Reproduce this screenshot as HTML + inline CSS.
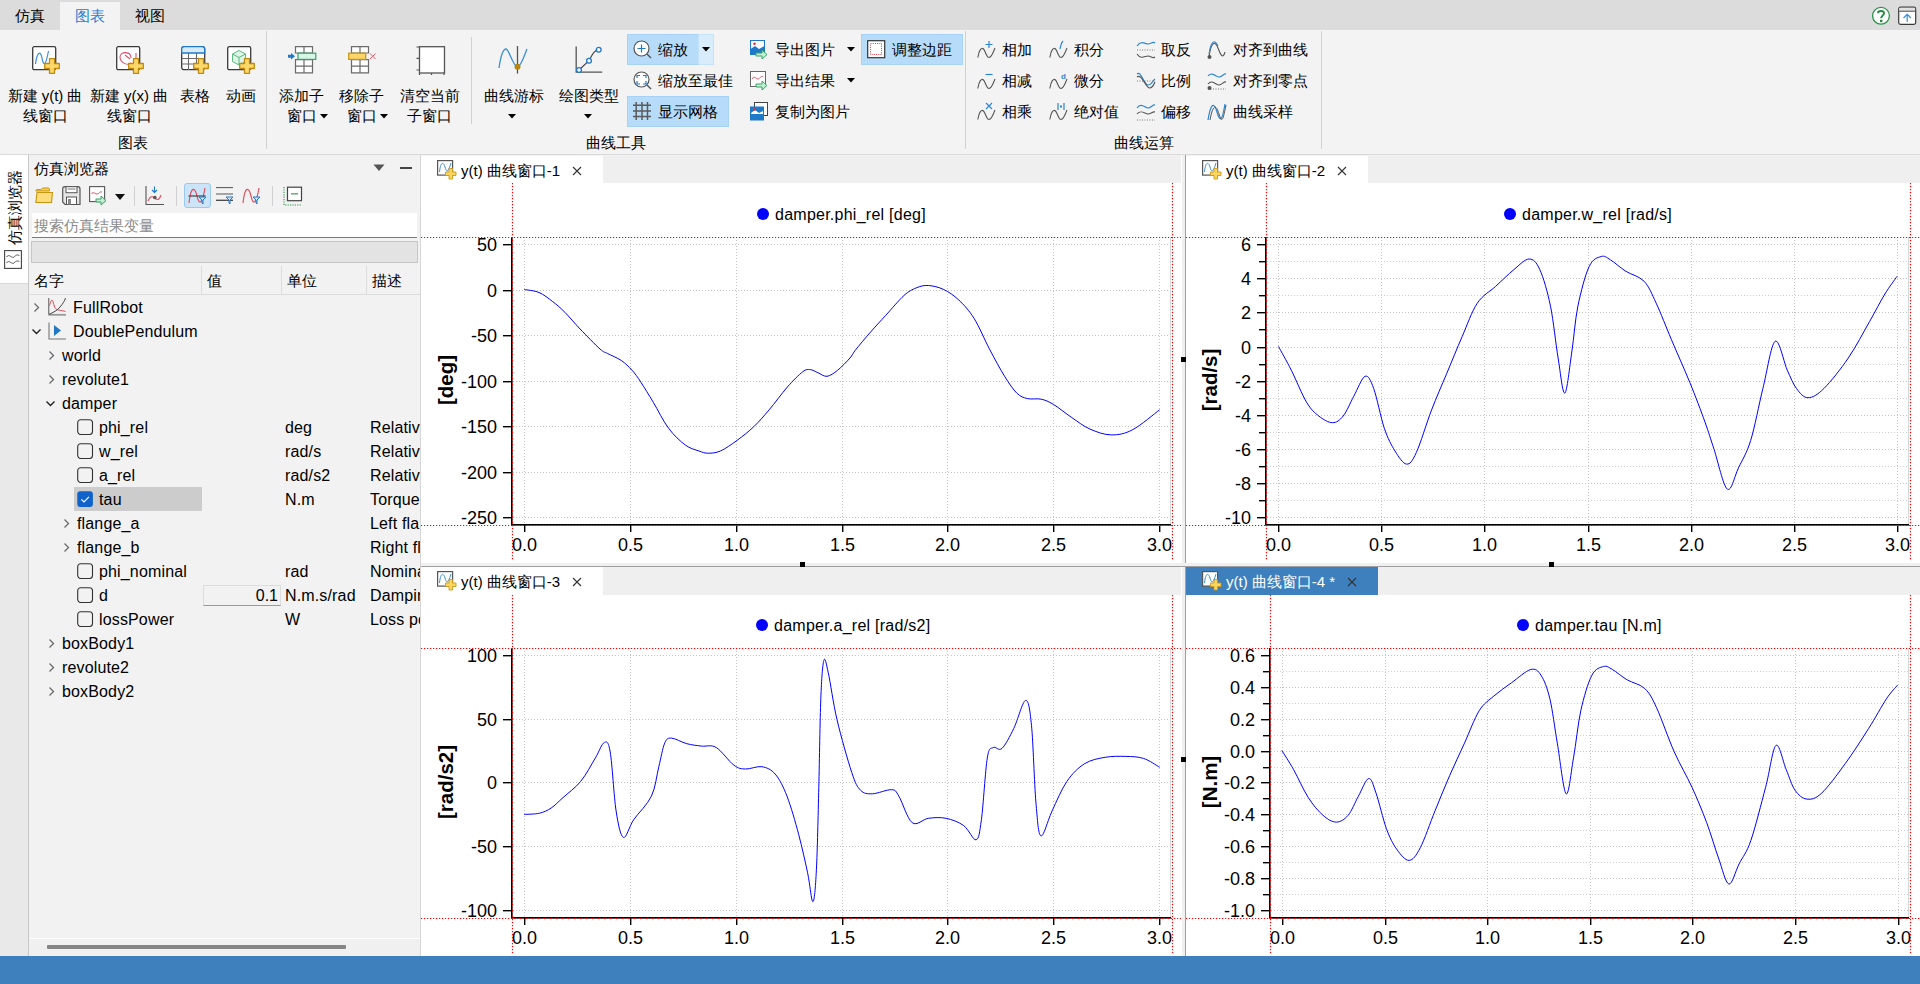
<!DOCTYPE html>
<html><head><meta charset="utf-8"><style>
*{margin:0;padding:0;box-sizing:border-box}
html,body{width:1920px;height:984px;overflow:hidden;background:#f3f3f3;font-family:"Liberation Sans",sans-serif;color:#000}
.a{position:absolute;white-space:nowrap}
svg text{font-family:"Liberation Sans",sans-serif}
.tk{font-size:18px;fill:#000}
.lg{font-size:16px;fill:#000;letter-spacing:0.25px}
.yl{font-size:20.5px;font-weight:bold;fill:#000}
.ct{position:absolute;height:28px;font-size:15px;line-height:28px;white-space:nowrap}
</style></head><body>
<div class="a" style="left:0;top:0;width:1920px;height:30px;background:#dcdcdc"></div>
<div class="a" style="left:60px;top:2px;width:60px;height:28px;background:#f3f3f3"></div>
<div class="a" style="left:15px;top:6px;font-size:15px;line-height:20px;color:#000;">仿真</div>
<div class="a" style="left:75px;top:6px;font-size:15px;line-height:20px;color:#2b7bd0;">图表</div>
<div class="a" style="left:135px;top:6px;font-size:15px;line-height:20px;color:#000;">视图</div>
<svg class="a" style="left:1872px;top:6px" width="19" height="20" viewBox="0 0 19 20"><circle cx="9" cy="9.8" r="8.4" fill="#fff" stroke="#2a9448" stroke-width="1.3"/><path d="M6 7.2 C6 4.3 12 4.3 12 7.2 C12 9.3 9.2 9.5 9.2 12.3" fill="none" stroke="#258a42" stroke-width="1.9"/><rect x="8" y="13.8" width="2.4" height="2.4" fill="#258a42"/></svg>
<svg class="a" style="left:1898px;top:6px" width="19" height="20" viewBox="0 0 19 20"><rect x="0.7" y="1.2" width="17" height="17.2" rx="1.8" fill="#fff" stroke="#3a3a3a" stroke-width="1.2"/><rect x="1.3" y="1.8" width="15.8" height="3" fill="#e2e2e2"/><path d="M0.7 5.2h17" stroke="#555" stroke-width="1.1"/><path d="M9.2 16V8.3 M5.5 12l3.7-3.7 3.7 3.7" fill="none" stroke="#3a8edb" stroke-width="1.2"/></svg>
<div class="a" style="left:0;top:154px;width:1920px;height:1px;background:#dadada"></div>
<div class="a" style="left:266px;top:31px;width:1px;height:118px;background:#d0d0d0"></div>
<div class="a" style="left:471px;top:37px;width:1px;height:87px;background:#d0d0d0"></div>
<div class="a" style="left:965px;top:31px;width:1px;height:118px;background:#d0d0d0"></div>
<div class="a" style="left:1321px;top:31px;width:1px;height:118px;background:#d0d0d0"></div>
<svg class="a" style="left:32px;top:46px" width="28" height="28" viewBox="0 0 28 28"><rect x="0.7" y="0.7" width="23" height="23" rx="1.5" fill="#fff" stroke="#3a3a3a" stroke-width="1.3"/><path d="M3.5 18 C5 6 8.5 4 10 12 S13.5 21 16.5 5" fill="none" stroke="#3a8edb" stroke-width="1.2"/><path d="M17.5 12.7h5v4.8h4.8v5h-4.8v4.8h-5v-4.8h-4.8v-5h4.8z" fill="#fcd86a" stroke="#c08a10" stroke-width="1.3" stroke-linejoin="round"/></svg>
<svg class="a" style="left:116px;top:46px" width="28" height="28" viewBox="0 0 28 28"><rect x="0.7" y="0.7" width="23" height="23" rx="1.5" fill="#fff" stroke="#3a3a3a" stroke-width="1.3"/><path d="M15 12 C15 5 4 5 4 11 C4 17 12 20 15 17" fill="none" stroke="#e0506a" stroke-width="1.1"/><path d="M9 9l5 4" stroke="#e0506a" stroke-width="1.1"/><path d="M20 7v9" stroke="#e0506a" stroke-width="1.1"/><path d="M17.5 12.7h5v4.8h4.8v5h-4.8v4.8h-5v-4.8h-4.8v-5h4.8z" fill="#fcd86a" stroke="#c08a10" stroke-width="1.3" stroke-linejoin="round"/></svg>
<svg class="a" style="left:181px;top:46px" width="28" height="28" viewBox="0 0 28 28"><rect x="0.7" y="0.7" width="23" height="23" rx="2.5" fill="#fff" stroke="#3a3a3a" stroke-width="1.3"/><path d="M0.7 7 V3.2 Q0.7 0.7 3.2 0.7 H21.2 Q23.7 0.7 23.7 3.2 V7z" fill="#d8ebfb" stroke="#1f78c8" stroke-width="1.3"/><path d="M7.5 7v17M15.5 7v17M1 12.5h23M1 18h23" stroke="#6a6a6a" stroke-width="1.1"/><path d="M17.5 12.7h5v4.8h4.8v5h-4.8v4.8h-5v-4.8h-4.8v-5h4.8z" fill="#fcd86a" stroke="#c08a10" stroke-width="1.3" stroke-linejoin="round"/></svg>
<svg class="a" style="left:227px;top:46px" width="28" height="28" viewBox="0 0 28 28"><rect x="0.7" y="0.7" width="23" height="23" rx="1.5" fill="#fff" stroke="#3a3a3a" stroke-width="1.3"/><path d="M12 4.5 L18.5 8 V15.5 L12 19 L5.5 15.5 V8z" fill="#dff5e8" stroke="#5bb981" stroke-width="1"/><path d="M5.5 8 L12 11.5 L18.5 8 M12 11.5 V19" fill="none" stroke="#5bb981" stroke-width="1"/><path d="M17.5 12.7h5v4.8h4.8v5h-4.8v4.8h-5v-4.8h-4.8v-5h4.8z" fill="#fcd86a" stroke="#c08a10" stroke-width="1.3" stroke-linejoin="round"/></svg>
<svg class="a" style="left:288px;top:46px" width="30" height="28" viewBox="0 0 30 28"><path d="M7.5 0.7h17v6.3h-17z M7.5 13.6h17v13.3h-17z" fill="#fff" stroke="#6a6a6a" stroke-width="1.2"/><path d="M16 0.7v6.3 M16 13.6v13.3 M7.5 20.2h17" stroke="#6a6a6a" stroke-width="1.2"/><rect x="10" y="7.2" width="17.8" height="6.2" fill="#d6f7e6" stroke="#3aa06a" stroke-width="1.2"/><path d="M0 8.8h3V7l4 3.3L3 13.6v-1.8H0z" fill="#1f78c8"/></svg>
<svg class="a" style="left:348px;top:46px" width="30" height="28" viewBox="0 0 30 28"><path d="M3.5 0.7h17v6.3h-17z M3.5 13.6h17v13.3h-17z" fill="#fff" stroke="#6a6a6a" stroke-width="1.2"/><path d="M12 0.7v6.3 M12 13.6v13.3 M3.5 20.2h17" stroke="#6a6a6a" stroke-width="1.2"/><rect x="0.7" y="7.2" width="17" height="6.2" fill="#fcd56a" stroke="#c8940e" stroke-width="1.2"/><path d="M22 7.5l5.5 5.5 M27.5 7.5l-5.5 5.5" stroke="#e05a6a" stroke-width="1"/></svg>
<svg class="a" style="left:414px;top:46px" width="32" height="30" viewBox="0 0 32 30"><rect x="5.5" y="0.7" width="25" height="26.3" fill="#fff" stroke="#555" stroke-width="1.3"/><path d="M2.5 1h3 M2.5 12.4h3 M2.5 24h3 M5.5 27v2 M17.5 27v2 M30 27v2" stroke="#555" stroke-width="1.2"/></svg>
<svg class="a" style="left:496px;top:44px" width="34" height="32" viewBox="0 0 34 32"><path d="M3 24 C5 10 7.5 5 10 5 C13 5 17 22.8 21.5 22.8 C25 22.8 28 12 31 5" fill="none" stroke="#3a8edb" stroke-width="1.3"/><path d="M21.5 2v27.6" stroke="#555" stroke-width="1.3"/><circle cx="21.5" cy="22.8" r="3" fill="#b8860b"/></svg>
<svg class="a" style="left:574px;top:45px" width="32" height="30" viewBox="0 0 32 30"><path d="M2.2 1.5v25.7h26" fill="none" stroke="#555" stroke-width="1.3"/><path d="M5 25 L15 15.7 C18 10 20 5 24.7 4.7" fill="none" stroke="#444" stroke-width="1.1"/><circle cx="5" cy="25" r="2.4" fill="#fff" stroke="#1f78c8" stroke-width="1.3"/><circle cx="15" cy="15.7" r="2.4" fill="#fff" stroke="#1f78c8" stroke-width="1.3"/><circle cx="24.7" cy="4.7" r="2.4" fill="#fff" stroke="#1f78c8" stroke-width="1.3"/></svg>
<div class="a" style="left:-15.0px;top:85.5px;width:120px;text-align:center;font-size:15px;line-height:20px;color:#000">新建 y(t) 曲</div>
<div class="a" style="left:-15.0px;top:105.5px;width:120px;text-align:center;font-size:15px;line-height:20px;color:#000">线窗口</div>
<div class="a" style="left:69.0px;top:85.5px;width:120px;text-align:center;font-size:15px;line-height:20px;color:#000">新建 y(x) 曲</div>
<div class="a" style="left:69.0px;top:105.5px;width:120px;text-align:center;font-size:15px;line-height:20px;color:#000">线窗口</div>
<div class="a" style="left:135.0px;top:85.5px;width:120px;text-align:center;font-size:15px;line-height:20px;color:#000">表格</div>
<div class="a" style="left:181.0px;top:85.5px;width:120px;text-align:center;font-size:15px;line-height:20px;color:#000">动画</div>
<div class="a" style="left:73.0px;top:132.5px;width:120px;text-align:center;font-size:15px;line-height:20px;color:#000">图表</div>
<div class="a" style="left:241.5px;top:85.5px;width:120px;text-align:center;font-size:15px;line-height:20px;color:#000">添加子</div>
<div class="a" style="left:287px;top:105.5px;font-size:15px;line-height:20px;color:#000;">窗口</div>
<svg class="a" style="left:320px;top:114px" width="8" height="5" viewBox="0 0 8 5"><path d="M0 0h8L4 4.5z" fill="#000"/></svg>
<div class="a" style="left:301.5px;top:85.5px;width:120px;text-align:center;font-size:15px;line-height:20px;color:#000">移除子</div>
<div class="a" style="left:347px;top:105.5px;font-size:15px;line-height:20px;color:#000;">窗口</div>
<svg class="a" style="left:380px;top:114px" width="8" height="5" viewBox="0 0 8 5"><path d="M0 0h8L4 4.5z" fill="#000"/></svg>
<div class="a" style="left:370.0px;top:85.5px;width:120px;text-align:center;font-size:15px;line-height:20px;color:#000">清空当前</div>
<div class="a" style="left:369.0px;top:105.5px;width:120px;text-align:center;font-size:15px;line-height:20px;color:#000">子窗口</div>
<div class="a" style="left:453.5px;top:85.5px;width:120px;text-align:center;font-size:15px;line-height:20px;color:#000">曲线游标</div>
<svg class="a" style="left:508px;top:114px" width="8" height="5" viewBox="0 0 8 5"><path d="M0 0h8L4 4.5z" fill="#000"/></svg>
<div class="a" style="left:529.0px;top:85.5px;width:120px;text-align:center;font-size:15px;line-height:20px;color:#000">绘图类型</div>
<svg class="a" style="left:584px;top:114px" width="8" height="5" viewBox="0 0 8 5"><path d="M0 0h8L4 4.5z" fill="#000"/></svg>
<div class="a" style="left:627px;top:34px;width:72px;height:31px;background:#b7dcfa;border:1px solid #a6d2f7"></div>
<div class="a" style="left:698px;top:34px;width:16px;height:31px;background:#d9ecfc;border:1px solid #c4e2fa"></div>
<svg class="a" style="left:702px;top:47px" width="8" height="5" viewBox="0 0 8 5"><path d="M0 0h8L4 4.5z" fill="#000"/></svg>
<div class="a" style="left:627px;top:96px;width:102px;height:31px;background:#b7dcfa;border:1px solid #a6d2f7"></div>
<div class="a" style="left:861px;top:34px;width:102px;height:31px;background:#b7dcfa;border:1px solid #a6d2f7"></div>
<svg class="a" style="left:632px;top:39px" width="20" height="20" viewBox="0 0 20 20"><circle cx="9.5" cy="9.5" r="7.5" fill="#fff" stroke="#555" stroke-width="1.2"/><path d="M15 15l4 4" stroke="#555" stroke-width="1.4"/><path d="M5.5 9.5h8 M9.5 5.5v8" stroke="#1f78c8" stroke-width="1.2"/></svg>
<div class="a" style="left:658px;top:40px;font-size:15px;line-height:20px;color:#000;">缩放</div>
<svg class="a" style="left:632px;top:70px" width="20" height="20" viewBox="0 0 20 20"><circle cx="9.5" cy="9.5" r="7.5" fill="#fff" stroke="#555" stroke-width="1.2"/><path d="M15 15l4 4" stroke="#555" stroke-width="1.4"/><path d="M5 8V5.5h3 M11 5.5h3V8 M14 11v3h-3 M8 14H5v-3" fill="none" stroke="#1f78c8" stroke-width="1.2"/></svg>
<div class="a" style="left:658px;top:71px;font-size:15px;line-height:20px;color:#000;">缩放至最佳</div>
<svg class="a" style="left:633px;top:102px" width="19" height="19" viewBox="0 0 19 19"><path d="M0 3.3h18 M0 9h18 M0 14.6h18 M3.2 0v18 M9 0v18 M14.5 0v18" stroke="#5a5a5a" stroke-width="1.5"/></svg>
<div class="a" style="left:658px;top:102px;font-size:15px;line-height:20px;color:#000;">显示网格</div>
<svg class="a" style="left:750px;top:40px" width="20" height="20" viewBox="0 0 20 20"><rect x="0.5" y="0.5" width="14" height="14" fill="#fff" stroke="#1f78c8" stroke-width="1"/><path d="M0.5 14.5V9 L5 6 L9 9 L14.5 6v8.5z" fill="#1f78c8"/><circle cx="4.5" cy="3.8" r="1.3" fill="#e03040"/><path d="M6 13h6v-3l5 4.5-5 4.5v-3H6z" fill="#bff0cf" stroke="#3aa06a" stroke-width="1"/></svg>
<div class="a" style="left:775px;top:40px;font-size:15px;line-height:20px;color:#000;">导出图片</div>
<svg class="a" style="left:847px;top:47px" width="8" height="5" viewBox="0 0 8 5"><path d="M0 0h8L4 4.5z" fill="#000"/></svg>
<svg class="a" style="left:750px;top:71px" width="20" height="20" viewBox="0 0 20 20"><rect x="0.5" y="0.5" width="15" height="15" fill="#fff" stroke="#666" stroke-width="1"/><path d="M2 8 C4 4 6 8 8 8 S11 4 13 6" fill="none" stroke="#e05060" stroke-width="1"/><path d="M6 13h6v-3l5 4.5-5 4.5v-3H6z" fill="#bff0cf" stroke="#3aa06a" stroke-width="1"/></svg>
<div class="a" style="left:775px;top:71px;font-size:15px;line-height:20px;color:#000;">导出结果</div>
<svg class="a" style="left:847px;top:78px" width="8" height="5" viewBox="0 0 8 5"><path d="M0 0h8L4 4.5z" fill="#000"/></svg>
<svg class="a" style="left:750px;top:102px" width="20" height="20" viewBox="0 0 20 20"><rect x="4.5" y="0.5" width="13" height="13" fill="#fff" stroke="#444" stroke-width="1"/><rect x="0" y="4.5" width="14" height="14" fill="#1f78c8"/><path d="M1 11 L5 8 L9 11 L13 9v3H1z" fill="#fff"/><circle cx="4.5" cy="7.5" r="1.3" fill="#e03040"/></svg>
<div class="a" style="left:775px;top:102px;font-size:15px;line-height:20px;color:#000;">复制为图片</div>
<svg class="a" style="left:867px;top:40px" width="19" height="19" viewBox="0 0 19 19"><rect x="0.7" y="0.7" width="17" height="17" fill="#fff" stroke="#333" stroke-width="1.2"/><rect x="3.5" y="3.5" width="11" height="11" fill="none" stroke="#e0303a" stroke-width="1" stroke-dasharray="1 1.2"/></svg>
<div class="a" style="left:892px;top:40px;font-size:15px;line-height:20px;color:#000;">调整边距</div>
<div class="a" style="left:556.0px;top:132.5px;width:120px;text-align:center;font-size:15px;line-height:20px;color:#000">曲线工具</div>
<svg class="a" style="left:977px;top:40px" width="20" height="20" viewBox="0 0 20 20"><path d="M0.8 17.5 C2 10 4.5 7 6.5 9 S9.5 17.5 12 17.5 S16.5 12 18 8" fill="none" stroke="#555" stroke-width="1.1"/><path d="M12 1v7 M8.5 4.5h7" stroke="#2a85d5" stroke-width="1.2"/></svg>
<div class="a" style="left:1002px;top:40px;font-size:15px;line-height:20px;color:#000;">相加</div>
<svg class="a" style="left:977px;top:71px" width="20" height="20" viewBox="0 0 20 20"><path d="M0.8 17.5 C2 10 4.5 7 6.5 9 S9.5 17.5 12 17.5 S16.5 12 18 8" fill="none" stroke="#555" stroke-width="1.1"/><path d="M8.5 3.5h7" stroke="#2a85d5" stroke-width="1.2"/></svg>
<div class="a" style="left:1002px;top:71px;font-size:15px;line-height:20px;color:#000;">相减</div>
<svg class="a" style="left:977px;top:102px" width="20" height="20" viewBox="0 0 20 20"><path d="M0.8 17.5 C2 10 4.5 7 6.5 9 S9.5 17.5 12 17.5 S16.5 12 18 8" fill="none" stroke="#555" stroke-width="1.1"/><path d="M9 1l6 6 M15 1l-6 6" stroke="#2a85d5" stroke-width="1.1"/></svg>
<div class="a" style="left:1002px;top:102px;font-size:15px;line-height:20px;color:#000;">相乘</div>
<svg class="a" style="left:1049px;top:40px" width="20" height="20" viewBox="0 0 20 20"><path d="M0.8 17.5 C2 10 4.5 7 6.5 9 S9.5 17.5 12 17.5 S16.5 12 18 8" fill="none" stroke="#555" stroke-width="1.1"/><path d="M11 9 C12 5 12 3 14 1" fill="none" stroke="#2a85d5" stroke-width="1.2"/></svg>
<div class="a" style="left:1074px;top:40px;font-size:15px;line-height:20px;color:#000;">积分</div>
<svg class="a" style="left:1049px;top:71px" width="20" height="20" viewBox="0 0 20 20"><path d="M0.8 17.5 C2 10 4.5 7 6.5 9 S9.5 17.5 12 17.5 S16.5 12 18 8" fill="none" stroke="#555" stroke-width="1.1"/><text x="12" y="8" font-size="8" font-weight="bold" fill="#2a85d5" font-family="Liberation Serif">d</text></svg>
<div class="a" style="left:1074px;top:71px;font-size:15px;line-height:20px;color:#000;">微分</div>
<svg class="a" style="left:1049px;top:102px" width="20" height="20" viewBox="0 0 20 20"><path d="M0.8 17.5 C2 10 4.5 7 6.5 9 S9.5 17.5 12 17.5 S16.5 12 18 8" fill="none" stroke="#555" stroke-width="1.1"/><path d="M9 1v7 M15 1v7" stroke="#2a85d5" stroke-width="1.2"/><rect x="11" y="3.5" width="2" height="2" fill="#2a85d5"/></svg>
<div class="a" style="left:1074px;top:102px;font-size:15px;line-height:20px;color:#000;">绝对值</div>
<svg class="a" style="left:1136px;top:40px" width="20" height="20" viewBox="0 0 20 20"><path d="M1 6 C5 0 9 4 12 4 S17 1 19 3" fill="none" stroke="#2a85d5" stroke-width="1.2"/><path d="M1 10h18" stroke="#777" stroke-width="1" stroke-dasharray="1 1.5"/><path d="M1 14 C5 20 9 16 12 16 S17 19 19 17" fill="none" stroke="#555" stroke-width="1.1"/></svg>
<div class="a" style="left:1161px;top:40px;font-size:15px;line-height:20px;color:#000;">取反</div>
<svg class="a" style="left:1136px;top:71px" width="20" height="20" viewBox="0 0 20 20"><path d="M1 3 C5 -1 8 14 12 14 S17 9 19 8" fill="none" stroke="#2a85d5" stroke-width="1.2"/><path d="M1 10h18" stroke="#777" stroke-width="1" stroke-dasharray="1 1.5"/><path d="M1 6 C6 2 10 18 14 17 S18 12 19 11" fill="none" stroke="#555" stroke-width="1.1"/></svg>
<div class="a" style="left:1161px;top:71px;font-size:15px;line-height:20px;color:#000;">比例</div>
<svg class="a" style="left:1136px;top:102px" width="20" height="20" viewBox="0 0 20 20"><path d="M1 6 C5 0 9 6 12 6 S17 2 19 3" fill="none" stroke="#2a85d5" stroke-width="1.2"/><path d="M1 12 C5 7 9 12 12 12 S17 9 19 10" fill="none" stroke="#555" stroke-width="1.1"/><path d="M1 18h18" stroke="#777" stroke-width="1" stroke-dasharray="1 1.5"/></svg>
<div class="a" style="left:1161px;top:102px;font-size:15px;line-height:20px;color:#000;">偏移</div>
<svg class="a" style="left:1207px;top:40px" width="20" height="20" viewBox="0 0 20 20"><path d="M2 17 C4 2 8 0 11 8 S16 19 18 12" fill="none" stroke="#555" stroke-width="1.1"/><path d="M2 14 C4 0 8 -1 11 6" fill="none" stroke="#2a85d5" stroke-width="1.1"/><circle cx="2.5" cy="17" r="2" fill="#555"/></svg>
<div class="a" style="left:1233px;top:40px;font-size:15px;line-height:20px;color:#000;">对齐到曲线</div>
<svg class="a" style="left:1207px;top:71px" width="20" height="20" viewBox="0 0 20 20"><path d="M1 5 C5 0 9 6 12 6 S17 2 19 3" fill="none" stroke="#2a85d5" stroke-width="1.2"/><path d="M1 13 C5 8 9 14 12 14 S17 10 19 11" fill="none" stroke="#555" stroke-width="1.1"/><path d="M1 18h18" stroke="#777" stroke-width="1" stroke-dasharray="1 1.5"/><circle cx="2.5" cy="17" r="2" fill="#555"/></svg>
<div class="a" style="left:1233px;top:71px;font-size:15px;line-height:20px;color:#000;">对齐到零点</div>
<svg class="a" style="left:1207px;top:102px" width="20" height="20" viewBox="0 0 20 20"><path d="M1 18 C4 0 7 0 10 10 S15 20 18 2" fill="none" stroke="#2a85d5" stroke-width="1.2"/><path d="M3 18 C6 2 9 2 12 12 S16 18 19 3" fill="none" stroke="#555" stroke-width="1"/></svg>
<div class="a" style="left:1233px;top:102px;font-size:15px;line-height:20px;color:#000;">曲线采样</div>
<div class="a" style="left:1084.0px;top:132.5px;width:120px;text-align:center;font-size:15px;line-height:20px;color:#000">曲线运算</div>
<div class="a" style="left:0;top:155px;width:28px;height:128px;background:#fff"></div>
<div class="a" style="left:0;top:283px;width:28px;height:673px;background:#e9e9e9"></div>
<div class="a" style="left:0;top:283px;width:28px;height:1px;background:#d8d8d8"></div>
<div class="a" style="left:28px;top:155px;width:1px;height:801px;background:#c8c8c8"></div>
<div class="a" style="left:29px;top:155px;width:391px;height:801px;background:#f2f2f2"></div>
<div class="a" style="left:420px;top:155px;width:1px;height:801px;background:#d6d6d6"></div>
<div class="a" style="left:5px;top:198px;width:20px;height:20px;font-size:15px;line-height:20px;transform:rotate(-90deg);transform-origin:10px 10px;"><span style="position:absolute;left:-27px;top:0">仿真浏览器</span></div>
<svg class="a" style="left:4px;top:250px" width="18" height="19" viewBox="0 0 18 19"><rect x="0.6" y="0.6" width="16.8" height="17.8" fill="#fff" stroke="#444" stroke-width="1.1"/><path d="M2.5 7 C5 3 8 9 10 7 S14 4 15.5 6 M2.5 13 C5 9 8 15 10 13 S14 10 15.5 12" fill="none" stroke="#555" stroke-width="1"/></svg>
<div class="a" style="left:34px;top:158.5px;font-size:15px;line-height:20px;color:#000;">仿真浏览器</div>
<svg class="a" style="left:373px;top:164px" width="12" height="8" viewBox="0 0 12 8"><path d="M0.5 0.5h11L6 7z" fill="#555"/></svg>
<div class="a" style="left:400px;top:167px;width:12px;height:1.6px;background:#444"></div>
<svg class="a" style="left:35px;top:187px" width="19" height="17" viewBox="0 0 19 17"><path d="M0.8 4 Q0.8 2.5 2.3 2.5 H6 L7.5 1 H13 Q14.5 1 14.5 2.5 V4z" fill="#f2cf5c" stroke="#c7950f" stroke-width="1"/><path d="M0.8 15.5 L2 5.5 H17.5 L16.5 15.5z" fill="#fbdc78" stroke="#c7950f" stroke-width="1.1"/></svg>
<svg class="a" style="left:62px;top:186px" width="19" height="20" viewBox="0 0 19 20"><path d="M0.7 3 Q0.7 0.7 3 0.7 H16 Q18 0.7 18 3 V18.5 H3 L0.7 16z" fill="#e6e6e6" stroke="#555" stroke-width="1.2"/><rect x="4" y="0.7" width="11" height="6" fill="#fff" stroke="#555" stroke-width="1"/><path d="M5.5 3h8" stroke="#777"/><rect x="4.5" y="11" width="10" height="7.5" fill="#fff" stroke="#555" stroke-width="1"/><rect x="6" y="13" width="3" height="5.5" fill="#888"/></svg>
<svg class="a" style="left:89px;top:186px" width="20" height="20" viewBox="0 0 20 20"><rect x="0.6" y="0.6" width="15" height="15" fill="#fff" stroke="#555" stroke-width="1.1"/><path d="M2.5 8 C4 5 6 8 8 8 S11 5 13 6" fill="none" stroke="#e05060" stroke-width="1"/><path d="M7 13h5v-3l5 4.5-5 4.5v-3H7z" fill="#bff0cf" stroke="#3aa06a" stroke-width="1"/></svg>
<svg class="a" style="left:115px;top:194px" width="10" height="6" viewBox="0 0 10 6"><path d="M0 0h10L5 6z" fill="#111"/></svg>
<div class="a" style="left:134px;top:186px;width:1px;height:20px;background:#d0d0d0"></div>
<svg class="a" style="left:145px;top:186px" width="20" height="20" viewBox="0 0 20 20"><path d="M1 0v18.5h18" fill="none" stroke="#555" stroke-width="1.1"/><path d="M9.5 0.5v6 M7 4l2.5 2.5L12 4" fill="none" stroke="#1f78c8" stroke-width="1.1"/><path d="M3 15 C5 10 7 10 9.5 12 S14 15 16 9" fill="none" stroke="#e05060" stroke-width="1.1"/><circle cx="9.8" cy="11.5" r="1.8" fill="#555"/></svg>
<div class="a" style="left:176px;top:186px;width:1px;height:20px;background:#d0d0d0"></div>
<div class="a" style="left:184px;top:183px;width:27px;height:25px;background:#cce4f7;border:1px solid #99c9ef;border-radius:3px"></div>
<svg class="a" style="left:188px;top:187px" width="20" height="18" viewBox="0 0 20 18"><path d="M1 16 C3 -2 7 0 9 9 S14 18 17 1" fill="none" stroke="#e05060" stroke-width="1.2"/><path d="M0.5 9h17" stroke="#444" stroke-width="1.2"/><path d="M11 10h7l-3 3v4l-1-1v-3z" fill="#cfe6fa" stroke="#1f78c8" stroke-width="1"/></svg>
<svg class="a" style="left:215px;top:187px" width="20" height="18" viewBox="0 0 20 18"><path d="M1 0.5h17" stroke="#666" stroke-width="1.3"/><path d="M1 7h17" stroke="#8a8a8a" stroke-width="1.5"/><path d="M1 13.3h17" stroke="#444" stroke-width="1.3"/><path d="M11 10h7l-3 3v4l-1-1v-3z" fill="#cfe6fa" stroke="#1f78c8" stroke-width="1"/></svg>
<svg class="a" style="left:242px;top:187px" width="20" height="18" viewBox="0 0 20 18"><path d="M1 16 C3 -2 7 0 9 9 S14 18 17 1" fill="none" stroke="#e05060" stroke-width="1.2"/><path d="M11 10h7l-3 3v4l-1-1v-3z" fill="#cfe6fa" stroke="#1f78c8" stroke-width="1"/></svg>
<div class="a" style="left:272px;top:186px;width:1px;height:20px;background:#d0d0d0"></div>
<svg class="a" style="left:283px;top:186px" width="20" height="20" viewBox="0 0 20 20"><path d="M1 1v18h18" fill="none" stroke="#2e9a4a" stroke-width="1.1" stroke-dasharray="1.2 1.2"/><rect x="4.5" y="1.2" width="14" height="13.5" fill="#fff" stroke="#444" stroke-width="1.2"/><path d="M8 7.8h7" stroke="#5aa86e" stroke-width="1.4"/></svg>
<div class="a" style="left:32px;top:213px;width:385px;height:25px;background:#fff;border-bottom:1px solid #7a7a7a"></div>
<div class="a" style="left:34px;top:215.5px;font-size:15px;line-height:20px;color:#8a8a8a;">搜索仿真结果变量</div>
<div class="a" style="left:31px;top:241px;width:387px;height:22px;background:#e3e3e3;border:1px solid #c6c6c6"></div>
<div class="a" style="left:29px;top:294px;width:391px;height:1px;background:#dcdcdc"></div>
<div class="a" style="left:201px;top:266px;width:1px;height:28px;background:#dcdcdc"></div>
<div class="a" style="left:281px;top:266px;width:1px;height:28px;background:#dcdcdc"></div>
<div class="a" style="left:366px;top:266px;width:1px;height:28px;background:#dcdcdc"></div>
<div class="a" style="left:34px;top:270.5px;font-size:15px;line-height:20px;color:#000;">名字</div>
<div class="a" style="left:207px;top:270.5px;font-size:15px;line-height:20px;color:#000;">值</div>
<div class="a" style="left:287px;top:270.5px;font-size:15px;line-height:20px;color:#000;">单位</div>
<div class="a" style="left:372px;top:270.5px;font-size:15px;line-height:20px;color:#000;">描述</div>
<svg class="a" style="left:33px;top:303px" width="7" height="10" viewBox="0 0 7 10"><path d="M1.5 0.5 L5.5 4.5 L1.5 8.5" fill="none" stroke="#6a6a6a" stroke-width="1.3"/></svg>
<svg class="a" style="left:48px;top:298px" width="19" height="19" viewBox="0 0 19 19"><path d="M0.8 0v16.5" stroke="#555" stroke-width="1"/><path d="M0.5 16.8h17.5" stroke="#9a9a9a" stroke-width="1.8"/><path d="M1.1 7.7 C2.5 6 3 1.5 4.2 2.2 C5.5 3 6 10 8.1 11.1 C10 12.3 14 12.5 17.5 13.4" fill="none" stroke="#e04a5a" stroke-width="1"/><path d="M0.8 16.5 C5 14.5 9.5 12.5 12 9 C15 5.5 16.5 3 17.5 0.1" fill="none" stroke="#444" stroke-width="1"/></svg>
<div class="a" style="left:73px;top:298px;font-size:16px;line-height:20px;color:#000;letter-spacing:0.15px">FullRobot</div>
<svg class="a" style="left:32px;top:328px" width="10" height="7" viewBox="0 0 10 7"><path d="M0.5 1.5 L4.5 5.5 L8.5 1.5" fill="none" stroke="#222" stroke-width="1.4"/></svg>
<svg class="a" style="left:48px;top:322px" width="19" height="19" viewBox="0 0 19 19"><path d="M1 0.5v16.5h17" fill="none" stroke="#777" stroke-width="1.1"/><path d="M6 3 L13 8.5 L6 14z" fill="#1f78c8"/></svg>
<div class="a" style="left:73px;top:322px;font-size:16px;line-height:20px;color:#000;letter-spacing:0.15px">DoublePendulum</div>
<svg class="a" style="left:48px;top:351px" width="7" height="10" viewBox="0 0 7 10"><path d="M1.5 0.5 L5.5 4.5 L1.5 8.5" fill="none" stroke="#6a6a6a" stroke-width="1.3"/></svg>
<div class="a" style="left:62px;top:346px;font-size:16px;line-height:20px;color:#000;letter-spacing:0.15px">world</div>
<svg class="a" style="left:48px;top:375px" width="7" height="10" viewBox="0 0 7 10"><path d="M1.5 0.5 L5.5 4.5 L1.5 8.5" fill="none" stroke="#6a6a6a" stroke-width="1.3"/></svg>
<div class="a" style="left:62px;top:370px;font-size:16px;line-height:20px;color:#000;letter-spacing:0.15px">revolute1</div>
<svg class="a" style="left:46px;top:400px" width="10" height="7" viewBox="0 0 10 7"><path d="M0.5 1.5 L4.5 5.5 L8.5 1.5" fill="none" stroke="#222" stroke-width="1.4"/></svg>
<div class="a" style="left:62px;top:394px;font-size:16px;line-height:20px;color:#000;letter-spacing:0.15px">damper</div>
<svg class="a" style="left:77px;top:419px" width="17" height="17" viewBox="0 0 17 17"><rect x="0.7" y="0.7" width="14.8" height="14.8" rx="3" fill="none" stroke="#333" stroke-width="1.1"/></svg>
<div class="a" style="left:99px;top:418px;font-size:16px;line-height:20px;color:#000;letter-spacing:0.15px">phi_rel</div>
<div class="a" style="left:285px;top:418px;font-size:16px;line-height:20px;color:#000;letter-spacing:0.15px">deg</div>
<div class="a" style="left:370px;top:418px;width:50px;overflow:hidden;font-size:16px;line-height:20px;letter-spacing:0.15px">Relativ</div>
<svg class="a" style="left:77px;top:443px" width="17" height="17" viewBox="0 0 17 17"><rect x="0.7" y="0.7" width="14.8" height="14.8" rx="3" fill="none" stroke="#333" stroke-width="1.1"/></svg>
<div class="a" style="left:99px;top:442px;font-size:16px;line-height:20px;color:#000;letter-spacing:0.15px">w_rel</div>
<div class="a" style="left:285px;top:442px;font-size:16px;line-height:20px;color:#000;letter-spacing:0.15px">rad/s</div>
<div class="a" style="left:370px;top:442px;width:50px;overflow:hidden;font-size:16px;line-height:20px;letter-spacing:0.15px">Relativ</div>
<svg class="a" style="left:77px;top:467px" width="17" height="17" viewBox="0 0 17 17"><rect x="0.7" y="0.7" width="14.8" height="14.8" rx="3" fill="none" stroke="#333" stroke-width="1.1"/></svg>
<div class="a" style="left:99px;top:466px;font-size:16px;line-height:20px;color:#000;letter-spacing:0.15px">a_rel</div>
<div class="a" style="left:285px;top:466px;font-size:16px;line-height:20px;color:#000;letter-spacing:0.15px">rad/s2</div>
<div class="a" style="left:370px;top:466px;width:50px;overflow:hidden;font-size:16px;line-height:20px;letter-spacing:0.15px">Relativ</div>
<div class="a" style="left:74px;top:487px;width:128px;height:24px;background:#cccccc"></div>
<svg class="a" style="left:77px;top:491px" width="17" height="17" viewBox="0 0 17 17"><rect x="0.3" y="0.3" width="15.6" height="15.6" rx="3" fill="#0e62c9"/><path d="M4.3 8.3 L7 11 L12 5.8" fill="none" stroke="#fff" stroke-width="1.2"/></svg>
<div class="a" style="left:99px;top:490px;font-size:16px;line-height:20px;color:#000;letter-spacing:0.15px">tau</div>
<div class="a" style="left:285px;top:490px;font-size:16px;line-height:20px;color:#000;letter-spacing:0.15px">N.m</div>
<div class="a" style="left:370px;top:490px;width:50px;overflow:hidden;font-size:16px;line-height:20px;letter-spacing:0.15px">Torque</div>
<svg class="a" style="left:63px;top:519px" width="7" height="10" viewBox="0 0 7 10"><path d="M1.5 0.5 L5.5 4.5 L1.5 8.5" fill="none" stroke="#6a6a6a" stroke-width="1.3"/></svg>
<div class="a" style="left:77px;top:514px;font-size:16px;line-height:20px;color:#000;letter-spacing:0.15px">flange_a</div>
<div class="a" style="left:370px;top:514px;width:50px;overflow:hidden;font-size:16px;line-height:20px;letter-spacing:0.15px">Left fla</div>
<svg class="a" style="left:63px;top:543px" width="7" height="10" viewBox="0 0 7 10"><path d="M1.5 0.5 L5.5 4.5 L1.5 8.5" fill="none" stroke="#6a6a6a" stroke-width="1.3"/></svg>
<div class="a" style="left:77px;top:538px;font-size:16px;line-height:20px;color:#000;letter-spacing:0.15px">flange_b</div>
<div class="a" style="left:370px;top:538px;width:50px;overflow:hidden;font-size:16px;line-height:20px;letter-spacing:0.15px">Right fl</div>
<svg class="a" style="left:77px;top:563px" width="17" height="17" viewBox="0 0 17 17"><rect x="0.7" y="0.7" width="14.8" height="14.8" rx="3" fill="none" stroke="#333" stroke-width="1.1"/></svg>
<div class="a" style="left:99px;top:562px;font-size:16px;line-height:20px;color:#000;letter-spacing:0.15px">phi_nominal</div>
<div class="a" style="left:285px;top:562px;font-size:16px;line-height:20px;color:#000;letter-spacing:0.15px">rad</div>
<div class="a" style="left:370px;top:562px;width:50px;overflow:hidden;font-size:16px;line-height:20px;letter-spacing:0.15px">Nomina</div>
<svg class="a" style="left:77px;top:587px" width="17" height="17" viewBox="0 0 17 17"><rect x="0.7" y="0.7" width="14.8" height="14.8" rx="3" fill="none" stroke="#333" stroke-width="1.1"/></svg>
<div class="a" style="left:99px;top:586px;font-size:16px;line-height:20px;color:#000;letter-spacing:0.15px">d</div>
<div class="a" style="left:285px;top:586px;font-size:16px;line-height:20px;color:#000;letter-spacing:0.15px">N.m.s/rad</div>
<div class="a" style="left:370px;top:586px;width:50px;overflow:hidden;font-size:16px;line-height:20px;letter-spacing:0.15px">Dampin</div>
<svg class="a" style="left:77px;top:611px" width="17" height="17" viewBox="0 0 17 17"><rect x="0.7" y="0.7" width="14.8" height="14.8" rx="3" fill="none" stroke="#333" stroke-width="1.1"/></svg>
<div class="a" style="left:99px;top:610px;font-size:16px;line-height:20px;color:#000;letter-spacing:0.15px">lossPower</div>
<div class="a" style="left:285px;top:610px;font-size:16px;line-height:20px;color:#000;letter-spacing:0.15px">W</div>
<div class="a" style="left:370px;top:610px;width:50px;overflow:hidden;font-size:16px;line-height:20px;letter-spacing:0.15px">Loss po</div>
<svg class="a" style="left:48px;top:639px" width="7" height="10" viewBox="0 0 7 10"><path d="M1.5 0.5 L5.5 4.5 L1.5 8.5" fill="none" stroke="#6a6a6a" stroke-width="1.3"/></svg>
<div class="a" style="left:62px;top:634px;font-size:16px;line-height:20px;color:#000;letter-spacing:0.15px">boxBody1</div>
<svg class="a" style="left:48px;top:663px" width="7" height="10" viewBox="0 0 7 10"><path d="M1.5 0.5 L5.5 4.5 L1.5 8.5" fill="none" stroke="#6a6a6a" stroke-width="1.3"/></svg>
<div class="a" style="left:62px;top:658px;font-size:16px;line-height:20px;color:#000;letter-spacing:0.15px">revolute2</div>
<svg class="a" style="left:48px;top:687px" width="7" height="10" viewBox="0 0 7 10"><path d="M1.5 0.5 L5.5 4.5 L1.5 8.5" fill="none" stroke="#6a6a6a" stroke-width="1.3"/></svg>
<div class="a" style="left:62px;top:682px;font-size:16px;line-height:20px;color:#000;letter-spacing:0.15px">boxBody2</div>
<div class="a" style="left:203px;top:585px;width:78px;height:21px;background:#f2f2f2;border:1px solid #dcdcdc;border-bottom:1px solid #9a9a9a"></div>
<div class="a" style="left:203px;top:585px;width:75px;text-align:right;font-size:16px;line-height:22px">0.1</div>
<div class="a" style="left:29px;top:938px;width:391px;height:1px;background:#fff"></div>
<div class="a" style="left:29px;top:939px;width:391px;height:17px;background:#f0f0f0"></div>
<div class="a" style="left:47px;top:945px;width:299px;height:4px;background:#858585;border-radius:1px"></div>
<div class="a" style="left:421px;top:156px;width:1499px;height:800px;background:#fff"></div>
<div class="a" style="left:421px;top:156px;width:760px;height:27px;background:#efefef"></div>
<div class="a" style="left:421px;top:156px;width:182px;height:27px;background:#fff"></div>
<svg class="a" style="left:437px;top:160px" width="20" height="20" viewBox="0 0 20 20"><rect x="0.6" y="0.6" width="15" height="14.5" fill="#fff" stroke="#555" stroke-width="1.2"/><path d="M2.5 12 C3.5 1.5 6.5 1.5 8 7 S11 13 14 3" fill="none" stroke="#3b8fd9" stroke-width="1"/><path d="M12 8.5h3.5v3.5h3.5v3.5h-3.5v3.5h-3.5v-3.5h-3.5v-3.5h3.5z" fill="#fbd65e" stroke="#c99a1e" stroke-width="0.9"/></svg>
<div class="ct" style="left:461px;top:157px;color:#000">y(t) 曲线窗口-1</div>
<svg class="a" style="left:572px;top:166px" width="10" height="10" viewBox="0 0 10 10"><path d="M1 1L9 9M9 1L1 9" stroke="#333" stroke-width="1.1"/></svg>
<div class="a" style="left:1186px;top:156px;width:734px;height:27px;background:#efefef"></div>
<div class="a" style="left:1186px;top:156px;width:182px;height:27px;background:#fff"></div>
<svg class="a" style="left:1202px;top:160px" width="20" height="20" viewBox="0 0 20 20"><rect x="0.6" y="0.6" width="15" height="14.5" fill="#fff" stroke="#555" stroke-width="1.2"/><path d="M2.5 12 C3.5 1.5 6.5 1.5 8 7 S11 13 14 3" fill="none" stroke="#3b8fd9" stroke-width="1"/><path d="M12 8.5h3.5v3.5h3.5v3.5h-3.5v3.5h-3.5v-3.5h-3.5v-3.5h3.5z" fill="#fbd65e" stroke="#c99a1e" stroke-width="0.9"/></svg>
<div class="ct" style="left:1226px;top:157px;color:#000">y(t) 曲线窗口-2</div>
<svg class="a" style="left:1337px;top:166px" width="10" height="10" viewBox="0 0 10 10"><path d="M1 1L9 9M9 1L1 9" stroke="#333" stroke-width="1.1"/></svg>
<div class="a" style="left:421px;top:567px;width:760px;height:28px;background:#efefef"></div>
<div class="a" style="left:421px;top:567px;width:182px;height:28px;background:#fff"></div>
<svg class="a" style="left:437px;top:571px" width="20" height="20" viewBox="0 0 20 20"><rect x="0.6" y="0.6" width="15" height="14.5" fill="#fff" stroke="#555" stroke-width="1.2"/><path d="M2.5 12 C3.5 1.5 6.5 1.5 8 7 S11 13 14 3" fill="none" stroke="#3b8fd9" stroke-width="1"/><path d="M12 8.5h3.5v3.5h3.5v3.5h-3.5v3.5h-3.5v-3.5h-3.5v-3.5h3.5z" fill="#fbd65e" stroke="#c99a1e" stroke-width="0.9"/></svg>
<div class="ct" style="left:461px;top:568px;color:#000">y(t) 曲线窗口-3</div>
<svg class="a" style="left:572px;top:577px" width="10" height="10" viewBox="0 0 10 10"><path d="M1 1L9 9M9 1L1 9" stroke="#333" stroke-width="1.1"/></svg>
<div class="a" style="left:1186px;top:567px;width:734px;height:28px;background:#efefef"></div>
<div class="a" style="left:1186px;top:567px;width:192px;height:28px;background:#3d80bd"></div>
<svg class="a" style="left:1202px;top:571px" width="20" height="20" viewBox="0 0 20 20"><rect x="0.6" y="0.6" width="15" height="14.5" fill="#fff" stroke="#555" stroke-width="1.2"/><path d="M2.5 12 C3.5 1.5 6.5 1.5 8 7 S11 13 14 3" fill="none" stroke="#3b8fd9" stroke-width="1"/><path d="M12 8.5h3.5v3.5h3.5v3.5h-3.5v3.5h-3.5v-3.5h-3.5v-3.5h3.5z" fill="#fbd65e" stroke="#c99a1e" stroke-width="0.9"/></svg>
<div class="ct" style="left:1226px;top:568px;color:#fff">y(t) 曲线窗口-4 *</div>
<svg class="a" style="left:1347px;top:577px" width="10" height="10" viewBox="0 0 10 10"><path d="M1 1L9 9M9 1L1 9" stroke="#333" stroke-width="1.1"/></svg>
<svg class="a" style="left:0;top:0" width="1920" height="984" viewBox="0 0 1920 984">
<rect x="421" y="183" width="760" height="380" fill="#fff"/>
<line x1="524.5" y1="237" x2="524.5" y2="524" stroke="#c4c4c4" stroke-width="1" stroke-dasharray="1 2"/>
<line x1="630.5" y1="237" x2="630.5" y2="524" stroke="#c4c4c4" stroke-width="1" stroke-dasharray="1 2"/>
<line x1="736.5" y1="237" x2="736.5" y2="524" stroke="#c4c4c4" stroke-width="1" stroke-dasharray="1 2"/>
<line x1="842.5" y1="237" x2="842.5" y2="524" stroke="#c4c4c4" stroke-width="1" stroke-dasharray="1 2"/>
<line x1="947.5" y1="237" x2="947.5" y2="524" stroke="#c4c4c4" stroke-width="1" stroke-dasharray="1 2"/>
<line x1="1053.5" y1="237" x2="1053.5" y2="524" stroke="#c4c4c4" stroke-width="1" stroke-dasharray="1 2"/>
<line x1="1159.5" y1="237" x2="1159.5" y2="524" stroke="#c4c4c4" stroke-width="1" stroke-dasharray="1 2"/>
<line x1="513" y1="244.5" x2="1170" y2="244.5" stroke="#c4c4c4" stroke-width="1" stroke-dasharray="1 2"/>
<line x1="513" y1="290.5" x2="1170" y2="290.5" stroke="#c4c4c4" stroke-width="1" stroke-dasharray="1 2"/>
<line x1="513" y1="335.5" x2="1170" y2="335.5" stroke="#c4c4c4" stroke-width="1" stroke-dasharray="1 2"/>
<line x1="513" y1="381.5" x2="1170" y2="381.5" stroke="#c4c4c4" stroke-width="1" stroke-dasharray="1 2"/>
<line x1="513" y1="426.5" x2="1170" y2="426.5" stroke="#c4c4c4" stroke-width="1" stroke-dasharray="1 2"/>
<line x1="513" y1="472.5" x2="1170" y2="472.5" stroke="#c4c4c4" stroke-width="1" stroke-dasharray="1 2"/>
<line x1="513" y1="517.5" x2="1170" y2="517.5" stroke="#c4c4c4" stroke-width="1" stroke-dasharray="1 2"/>
<line x1="1170.5" y1="237" x2="1170.5" y2="524" stroke="#d8d8d8" stroke-width="1"/>
<path d="M524.3 289.5 C526.8 290.0 534.3 290.5 539.0 292.5 C543.7 294.5 548.4 298.3 552.7 301.6 C557.0 304.9 560.3 307.7 564.9 312.3 C569.5 316.9 574.2 322.9 580.1 329.0 C586.0 335.1 595.4 344.9 600.0 349.0 C604.6 353.1 604.1 351.6 607.6 353.5 C611.1 355.4 617.2 357.7 621.3 360.5 C625.4 363.3 628.7 366.6 632.0 370.2 C635.3 373.8 637.5 377.0 641.0 382.4 C644.5 387.8 648.7 394.7 653.3 402.3 C657.9 409.9 663.2 421.1 668.5 428.2 C673.8 435.3 680.2 441.2 685.3 445.0 C690.4 448.8 695.2 449.6 699.0 451.0 C702.8 452.4 704.6 453.2 708.2 453.2 C711.8 453.2 715.6 453.1 720.4 451.0 C725.2 448.9 731.4 444.5 737.0 440.4 C742.6 436.3 748.5 431.7 753.9 426.6 C759.2 421.5 763.5 416.5 769.1 409.9 C774.7 403.3 781.8 393.4 787.4 387.0 C793.0 380.6 798.9 374.7 802.7 371.8 C806.5 368.9 807.8 369.5 810.3 369.6 C812.8 369.8 815.1 371.6 817.9 372.7 C820.7 373.8 823.7 376.7 827.0 376.3 C830.3 375.9 833.9 373.2 837.7 370.2 C841.5 367.1 847.1 361.3 850.0 358.0 C852.9 354.7 851.8 354.7 855.2 350.4 C858.6 346.1 865.4 337.9 870.5 332.1 C875.6 326.3 880.1 321.5 885.7 315.4 C891.3 309.3 898.9 300.1 904.0 295.5 C909.1 290.9 912.1 289.6 916.2 287.9 C920.3 286.2 923.8 285.2 928.4 285.5 C933.0 285.8 938.6 287.1 943.7 289.5 C948.8 291.9 953.8 295.3 958.9 300.1 C964.0 304.9 969.0 310.3 974.1 318.4 C979.2 326.5 984.3 339.2 989.4 348.9 C994.5 358.5 1000.0 368.9 1004.6 376.3 C1009.2 383.7 1013.0 389.4 1016.8 393.1 C1020.6 396.8 1023.4 397.6 1027.5 398.6 C1031.6 399.6 1036.9 398.2 1041.2 399.2 C1045.5 400.2 1048.3 401.3 1053.4 404.4 C1058.5 407.4 1065.6 413.4 1071.7 417.5 C1077.8 421.6 1083.4 426.2 1090.0 429.1 C1096.6 432.0 1104.2 434.8 1111.3 434.9 C1118.4 435.0 1124.7 433.9 1132.7 429.7 C1140.7 425.5 1155.0 413.2 1159.5 409.9" fill="none" stroke="#0000ff" stroke-width="1"/>
<rect x="511" y="237" width="1.6" height="288" fill="#000"/>
<rect x="511" y="524" width="660" height="1.6" fill="#000"/>
<rect x="503" y="244" width="8" height="1.4" fill="#000"/>
<text x="497" y="250.5" text-anchor="end" class="tk">50</text>
<rect x="503" y="290" width="8" height="1.4" fill="#000"/>
<text x="497" y="296.5" text-anchor="end" class="tk">0</text>
<rect x="503" y="335" width="8" height="1.4" fill="#000"/>
<text x="497" y="341.5" text-anchor="end" class="tk">-50</text>
<rect x="503" y="381" width="8" height="1.4" fill="#000"/>
<text x="497" y="387.5" text-anchor="end" class="tk">-100</text>
<rect x="503" y="426" width="8" height="1.4" fill="#000"/>
<text x="497" y="432.5" text-anchor="end" class="tk">-150</text>
<rect x="503" y="472" width="8" height="1.4" fill="#000"/>
<text x="497" y="478.5" text-anchor="end" class="tk">-200</text>
<rect x="503" y="517" width="8" height="1.4" fill="#000"/>
<text x="497" y="523.5" text-anchor="end" class="tk">-250</text>
<rect x="524" y="525" width="1.4" height="7" fill="#000"/>
<text x="524.5" y="551" text-anchor="middle" class="tk">0.0</text>
<rect x="630" y="525" width="1.4" height="7" fill="#000"/>
<text x="630.5" y="551" text-anchor="middle" class="tk">0.5</text>
<rect x="736" y="525" width="1.4" height="7" fill="#000"/>
<text x="736.5" y="551" text-anchor="middle" class="tk">1.0</text>
<rect x="842" y="525" width="1.4" height="7" fill="#000"/>
<text x="842.5" y="551" text-anchor="middle" class="tk">1.5</text>
<rect x="947" y="525" width="1.4" height="7" fill="#000"/>
<text x="947.5" y="551" text-anchor="middle" class="tk">2.0</text>
<rect x="1053" y="525" width="1.4" height="7" fill="#000"/>
<text x="1053.5" y="551" text-anchor="middle" class="tk">2.5</text>
<rect x="1159" y="525" width="1.4" height="7" fill="#000"/>
<text x="1159.5" y="551" text-anchor="middle" class="tk">3.0</text>
<line x1="512.5" y1="183" x2="512.5" y2="560" stroke="#ff0000" stroke-width="1.2" stroke-dasharray="1.2 1.8"/>
<line x1="1172.5" y1="183" x2="1172.5" y2="560" stroke="#ff0000" stroke-width="1.2" stroke-dasharray="1.2 1.8"/>
<line x1="421" y1="237.5" x2="1181" y2="237.5" stroke="#ff0000" stroke-width="1.2" stroke-dasharray="1.2 1.8"/>
<line x1="421" y1="525.5" x2="1181" y2="525.5" stroke="#ff0000" stroke-width="1.2" stroke-dasharray="1.2 1.8"/>
<circle cx="763" cy="214" r="6" fill="#0000ff"/>
<text x="775" y="220" class="lg">damper.phi_rel [deg]</text>
<text x="0" y="0" transform="translate(453 380) rotate(-90)" text-anchor="middle" class="yl">[deg]</text>
<rect x="1186" y="183" width="734" height="382" fill="#fff"/>
<line x1="1278.5" y1="237" x2="1278.5" y2="524" stroke="#c4c4c4" stroke-width="1" stroke-dasharray="1 2"/>
<line x1="1381.5" y1="237" x2="1381.5" y2="524" stroke="#c4c4c4" stroke-width="1" stroke-dasharray="1 2"/>
<line x1="1484.5" y1="237" x2="1484.5" y2="524" stroke="#c4c4c4" stroke-width="1" stroke-dasharray="1 2"/>
<line x1="1588.5" y1="237" x2="1588.5" y2="524" stroke="#c4c4c4" stroke-width="1" stroke-dasharray="1 2"/>
<line x1="1691.5" y1="237" x2="1691.5" y2="524" stroke="#c4c4c4" stroke-width="1" stroke-dasharray="1 2"/>
<line x1="1794.5" y1="237" x2="1794.5" y2="524" stroke="#c4c4c4" stroke-width="1" stroke-dasharray="1 2"/>
<line x1="1897.5" y1="237" x2="1897.5" y2="524" stroke="#c4c4c4" stroke-width="1" stroke-dasharray="1 2"/>
<line x1="1267" y1="244.5" x2="1908" y2="244.5" stroke="#c4c4c4" stroke-width="1" stroke-dasharray="1 2"/>
<line x1="1267" y1="261.5" x2="1908" y2="261.5" stroke="#d0d0d0" stroke-width="1" stroke-dasharray="1 2"/>
<line x1="1267" y1="278.5" x2="1908" y2="278.5" stroke="#c4c4c4" stroke-width="1" stroke-dasharray="1 2"/>
<line x1="1267" y1="295.5" x2="1908" y2="295.5" stroke="#d0d0d0" stroke-width="1" stroke-dasharray="1 2"/>
<line x1="1267" y1="312.5" x2="1908" y2="312.5" stroke="#c4c4c4" stroke-width="1" stroke-dasharray="1 2"/>
<line x1="1267" y1="329.5" x2="1908" y2="329.5" stroke="#d0d0d0" stroke-width="1" stroke-dasharray="1 2"/>
<line x1="1267" y1="347.5" x2="1908" y2="347.5" stroke="#c4c4c4" stroke-width="1" stroke-dasharray="1 2"/>
<line x1="1267" y1="364.5" x2="1908" y2="364.5" stroke="#d0d0d0" stroke-width="1" stroke-dasharray="1 2"/>
<line x1="1267" y1="381.5" x2="1908" y2="381.5" stroke="#c4c4c4" stroke-width="1" stroke-dasharray="1 2"/>
<line x1="1267" y1="398.5" x2="1908" y2="398.5" stroke="#d0d0d0" stroke-width="1" stroke-dasharray="1 2"/>
<line x1="1267" y1="415.5" x2="1908" y2="415.5" stroke="#c4c4c4" stroke-width="1" stroke-dasharray="1 2"/>
<line x1="1267" y1="432.5" x2="1908" y2="432.5" stroke="#d0d0d0" stroke-width="1" stroke-dasharray="1 2"/>
<line x1="1267" y1="449.5" x2="1908" y2="449.5" stroke="#c4c4c4" stroke-width="1" stroke-dasharray="1 2"/>
<line x1="1267" y1="466.5" x2="1908" y2="466.5" stroke="#d0d0d0" stroke-width="1" stroke-dasharray="1 2"/>
<line x1="1267" y1="483.5" x2="1908" y2="483.5" stroke="#c4c4c4" stroke-width="1" stroke-dasharray="1 2"/>
<line x1="1267" y1="500.5" x2="1908" y2="500.5" stroke="#d0d0d0" stroke-width="1" stroke-dasharray="1 2"/>
<line x1="1267" y1="517.5" x2="1908" y2="517.5" stroke="#c4c4c4" stroke-width="1" stroke-dasharray="1 2"/>
<line x1="1908.5" y1="237" x2="1908.5" y2="524" stroke="#d8d8d8" stroke-width="1"/>
<path d="M1278.5 346.5 C1280.6 350.4 1286.6 360.9 1291.3 370.2 C1296.0 379.5 1302.0 394.7 1306.6 402.3 C1311.2 409.9 1314.5 412.6 1318.8 416.0 C1323.1 419.4 1328.4 422.7 1332.5 422.7 C1336.6 422.7 1339.7 420.4 1343.2 416.0 C1346.8 411.6 1350.2 402.8 1353.8 396.2 C1357.4 389.6 1361.8 377.6 1365.1 376.3 C1368.4 375.0 1370.5 379.9 1373.7 388.5 C1376.9 397.1 1380.8 417.8 1384.3 428.2 C1387.8 438.6 1391.3 445.0 1395.0 451.0 C1398.7 457.0 1403.0 463.8 1406.6 464.1 C1410.1 464.4 1412.1 461.6 1416.3 452.6 C1420.5 443.6 1426.5 423.1 1431.6 409.9 C1436.7 396.7 1441.7 385.5 1446.8 373.3 C1451.9 361.1 1457.0 348.4 1462.1 336.7 C1467.2 325.0 1471.7 311.6 1477.3 303.2 C1482.9 294.8 1489.5 292.0 1495.6 286.4 C1501.7 280.8 1508.3 274.2 1513.9 269.6 C1519.5 265.0 1524.8 259.0 1529.1 259.0 C1533.4 259.0 1536.2 261.7 1539.8 269.6 C1543.4 277.5 1547.5 291.5 1550.5 306.2 C1553.5 320.9 1555.7 343.5 1558.1 358.0 C1560.5 372.5 1562.5 394.1 1564.8 393.1 C1567.1 392.1 1569.6 366.5 1571.8 352.0 C1574.0 337.5 1575.0 320.4 1577.9 306.2 C1580.8 292.0 1585.2 274.9 1589.1 266.6 C1593.0 258.3 1597.7 257.6 1601.3 256.5 C1604.9 255.4 1606.4 257.4 1610.5 259.9 C1614.6 262.3 1620.1 267.6 1625.7 271.2 C1631.3 274.8 1638.9 275.9 1644.0 281.2 C1649.1 286.5 1651.6 293.4 1656.2 303.2 C1660.8 313.0 1665.9 326.6 1671.5 339.8 C1677.1 353.0 1684.2 368.7 1689.8 382.4 C1695.4 396.1 1701.0 410.9 1705.0 422.1 C1709.0 433.3 1710.4 438.3 1714.1 449.5 C1717.8 460.7 1723.2 486.1 1727.3 489.1 C1731.4 492.2 1734.6 475.9 1738.5 467.8 C1742.4 459.7 1746.6 453.6 1750.7 440.4 C1754.8 427.2 1758.8 405.0 1762.9 388.5 C1767.0 372.0 1771.0 344.4 1775.1 341.3 C1779.2 338.2 1783.7 362.3 1787.3 370.2 C1790.9 378.1 1793.0 383.9 1796.5 388.5 C1800.0 393.1 1803.4 397.7 1808.0 397.7 C1812.6 397.7 1817.2 395.1 1823.9 388.5 C1830.6 381.9 1840.7 369.2 1848.3 358.0 C1855.9 346.8 1863.5 332.2 1869.6 321.5 C1875.7 310.8 1880.3 301.5 1884.9 294.0 C1889.5 286.5 1895.1 279.2 1897.1 276.3" fill="none" stroke="#0000ff" stroke-width="1"/>
<rect x="1265" y="237" width="1.6" height="288" fill="#000"/>
<rect x="1265" y="524" width="644" height="1.6" fill="#000"/>
<rect x="1257" y="244" width="8" height="1.4" fill="#000"/>
<text x="1251" y="250.5" text-anchor="end" class="tk">6</text>
<rect x="1259" y="261" width="6" height="1.4" fill="#000"/>
<rect x="1257" y="278" width="8" height="1.4" fill="#000"/>
<text x="1251" y="284.5" text-anchor="end" class="tk">4</text>
<rect x="1259" y="295" width="6" height="1.4" fill="#000"/>
<rect x="1257" y="312" width="8" height="1.4" fill="#000"/>
<text x="1251" y="318.5" text-anchor="end" class="tk">2</text>
<rect x="1259" y="329" width="6" height="1.4" fill="#000"/>
<rect x="1257" y="347" width="8" height="1.4" fill="#000"/>
<text x="1251" y="353.5" text-anchor="end" class="tk">0</text>
<rect x="1259" y="364" width="6" height="1.4" fill="#000"/>
<rect x="1257" y="381" width="8" height="1.4" fill="#000"/>
<text x="1251" y="387.5" text-anchor="end" class="tk">-2</text>
<rect x="1259" y="398" width="6" height="1.4" fill="#000"/>
<rect x="1257" y="415" width="8" height="1.4" fill="#000"/>
<text x="1251" y="421.5" text-anchor="end" class="tk">-4</text>
<rect x="1259" y="432" width="6" height="1.4" fill="#000"/>
<rect x="1257" y="449" width="8" height="1.4" fill="#000"/>
<text x="1251" y="455.5" text-anchor="end" class="tk">-6</text>
<rect x="1259" y="466" width="6" height="1.4" fill="#000"/>
<rect x="1257" y="483" width="8" height="1.4" fill="#000"/>
<text x="1251" y="489.5" text-anchor="end" class="tk">-8</text>
<rect x="1259" y="500" width="6" height="1.4" fill="#000"/>
<rect x="1257" y="517" width="8" height="1.4" fill="#000"/>
<text x="1251" y="523.5" text-anchor="end" class="tk">-10</text>
<rect x="1278" y="525" width="1.4" height="7" fill="#000"/>
<text x="1278.5" y="551" text-anchor="middle" class="tk">0.0</text>
<rect x="1381" y="525" width="1.4" height="7" fill="#000"/>
<text x="1381.5" y="551" text-anchor="middle" class="tk">0.5</text>
<rect x="1484" y="525" width="1.4" height="7" fill="#000"/>
<text x="1484.5" y="551" text-anchor="middle" class="tk">1.0</text>
<rect x="1588" y="525" width="1.4" height="7" fill="#000"/>
<text x="1588.5" y="551" text-anchor="middle" class="tk">1.5</text>
<rect x="1691" y="525" width="1.4" height="7" fill="#000"/>
<text x="1691.5" y="551" text-anchor="middle" class="tk">2.0</text>
<rect x="1794" y="525" width="1.4" height="7" fill="#000"/>
<text x="1794.5" y="551" text-anchor="middle" class="tk">2.5</text>
<rect x="1897" y="525" width="1.4" height="7" fill="#000"/>
<text x="1897.5" y="551" text-anchor="middle" class="tk">3.0</text>
<line x1="1266.5" y1="183" x2="1266.5" y2="560" stroke="#ff0000" stroke-width="1.2" stroke-dasharray="1.2 1.8"/>
<line x1="1910.5" y1="183" x2="1910.5" y2="560" stroke="#ff0000" stroke-width="1.2" stroke-dasharray="1.2 1.8"/>
<line x1="1186" y1="237.5" x2="1920" y2="237.5" stroke="#ff0000" stroke-width="1.2" stroke-dasharray="1.2 1.8"/>
<line x1="1186" y1="525.5" x2="1920" y2="525.5" stroke="#ff0000" stroke-width="1.2" stroke-dasharray="1.2 1.8"/>
<circle cx="1510" cy="214" r="6" fill="#0000ff"/>
<text x="1522" y="220" class="lg">damper.w_rel [rad/s]</text>
<text x="0" y="0" transform="translate(1217 380) rotate(-90)" text-anchor="middle" class="yl">[rad/s]</text>
<rect x="421" y="595" width="760" height="361" fill="#fff"/>
<line x1="524.5" y1="648" x2="524.5" y2="917" stroke="#c4c4c4" stroke-width="1" stroke-dasharray="1 2"/>
<line x1="630.5" y1="648" x2="630.5" y2="917" stroke="#c4c4c4" stroke-width="1" stroke-dasharray="1 2"/>
<line x1="736.5" y1="648" x2="736.5" y2="917" stroke="#c4c4c4" stroke-width="1" stroke-dasharray="1 2"/>
<line x1="842.5" y1="648" x2="842.5" y2="917" stroke="#c4c4c4" stroke-width="1" stroke-dasharray="1 2"/>
<line x1="947.5" y1="648" x2="947.5" y2="917" stroke="#c4c4c4" stroke-width="1" stroke-dasharray="1 2"/>
<line x1="1053.5" y1="648" x2="1053.5" y2="917" stroke="#c4c4c4" stroke-width="1" stroke-dasharray="1 2"/>
<line x1="1159.5" y1="648" x2="1159.5" y2="917" stroke="#c4c4c4" stroke-width="1" stroke-dasharray="1 2"/>
<line x1="513" y1="655.5" x2="1170" y2="655.5" stroke="#c4c4c4" stroke-width="1" stroke-dasharray="1 2"/>
<line x1="513" y1="719.5" x2="1170" y2="719.5" stroke="#c4c4c4" stroke-width="1" stroke-dasharray="1 2"/>
<line x1="513" y1="782.5" x2="1170" y2="782.5" stroke="#c4c4c4" stroke-width="1" stroke-dasharray="1 2"/>
<line x1="513" y1="846.5" x2="1170" y2="846.5" stroke="#c4c4c4" stroke-width="1" stroke-dasharray="1 2"/>
<line x1="513" y1="910.5" x2="1170" y2="910.5" stroke="#c4c4c4" stroke-width="1" stroke-dasharray="1 2"/>
<line x1="1170.5" y1="648" x2="1170.5" y2="917" stroke="#d8d8d8" stroke-width="1"/>
<path d="M524.1 814.4 C526.7 814.2 535.0 814.3 539.5 813.2 C544.0 812.1 547.3 810.6 551.2 808.0 C555.1 805.4 558.1 802.0 563.0 797.6 C567.9 793.2 575.3 788.0 580.7 781.4 C586.1 774.8 591.5 764.4 595.4 757.9 C599.3 751.4 601.8 743.5 604.3 742.5 C606.8 741.5 608.2 740.6 610.2 752.0 C612.2 763.4 613.9 796.7 616.1 810.9 C618.3 825.1 620.5 835.9 623.4 837.4 C626.3 838.9 629.0 826.6 633.7 819.7 C638.4 812.8 647.2 805.0 651.4 796.2 C655.6 787.4 656.6 775.6 658.8 766.7 C661.0 757.9 662.6 747.9 664.7 743.1 C666.8 738.3 667.8 738.0 671.5 738.1 C675.2 738.2 681.8 742.4 686.8 743.7 C691.8 745.0 696.6 745.5 701.5 746.1 C706.4 746.7 710.8 744.3 716.2 747.5 C721.6 750.7 729.0 761.6 733.9 765.2 C738.8 768.8 741.0 768.8 745.7 769.0 C750.4 769.2 757.0 765.9 761.9 766.7 C766.8 767.6 771.0 769.2 775.2 774.1 C779.4 779.0 783.1 786.1 787.0 796.2 C790.9 806.3 795.3 821.7 798.7 834.5 C802.1 847.3 805.2 861.6 807.6 872.8 C810.0 884.0 811.4 902.1 812.9 901.6 C814.4 901.1 815.4 888.8 816.4 869.8 C817.4 850.8 818.1 815.8 818.8 787.3 C819.5 758.8 820.0 720.0 820.8 698.9 C821.6 677.8 822.6 665.0 823.8 660.6 C825.0 656.2 826.0 662.6 828.2 672.4 C830.4 682.2 833.1 702.9 837.0 719.6 C840.9 736.3 847.9 760.8 851.8 772.6 C855.7 784.4 857.2 786.8 860.6 790.3 C864.0 793.8 867.2 793.9 872.4 793.8 C877.6 793.7 887.2 789.3 891.6 789.7 C896.0 790.1 895.5 790.7 898.9 796.2 C902.3 801.7 907.3 819.0 912.2 822.7 C917.1 826.4 922.8 819.0 928.4 818.3 C934.0 817.6 940.2 817.1 946.1 818.3 C952.0 819.5 958.7 822.0 963.7 825.6 C968.7 829.2 973.2 840.8 976.1 839.8 C979.0 838.8 979.5 833.4 981.4 819.7 C983.3 806.1 985.3 769.9 987.3 757.9 C989.3 745.9 990.8 749.1 993.2 747.5 C995.7 745.9 998.6 751.6 1002.0 748.4 C1005.4 745.2 1009.9 736.4 1013.8 728.4 C1017.7 720.4 1022.6 700.9 1025.6 700.4 C1028.5 699.9 1029.8 708.5 1031.5 725.4 C1033.2 742.3 1034.3 783.6 1035.9 802.0 C1037.5 820.4 1038.2 834.4 1040.9 835.9 C1043.6 837.4 1047.8 820.0 1052.1 810.9 C1056.4 801.8 1061.5 789.3 1066.9 781.4 C1072.3 773.5 1078.2 767.7 1084.6 763.7 C1091.0 759.7 1098.3 758.5 1105.2 757.3 C1112.1 756.1 1119.4 756.2 1125.8 756.4 C1132.2 756.6 1137.8 756.6 1143.5 758.4 C1149.2 760.2 1157.0 765.8 1159.7 767.3" fill="none" stroke="#0000ff" stroke-width="1"/>
<rect x="511" y="648" width="1.6" height="270" fill="#000"/>
<rect x="511" y="917" width="660" height="1.6" fill="#000"/>
<rect x="503" y="655" width="8" height="1.4" fill="#000"/>
<text x="497" y="661.5" text-anchor="end" class="tk">100</text>
<rect x="503" y="719" width="8" height="1.4" fill="#000"/>
<text x="497" y="725.5" text-anchor="end" class="tk">50</text>
<rect x="503" y="782" width="8" height="1.4" fill="#000"/>
<text x="497" y="788.5" text-anchor="end" class="tk">0</text>
<rect x="503" y="846" width="8" height="1.4" fill="#000"/>
<text x="497" y="852.5" text-anchor="end" class="tk">-50</text>
<rect x="503" y="910" width="8" height="1.4" fill="#000"/>
<text x="497" y="916.5" text-anchor="end" class="tk">-100</text>
<rect x="524" y="918" width="1.4" height="7" fill="#000"/>
<text x="524.5" y="944" text-anchor="middle" class="tk">0.0</text>
<rect x="630" y="918" width="1.4" height="7" fill="#000"/>
<text x="630.5" y="944" text-anchor="middle" class="tk">0.5</text>
<rect x="736" y="918" width="1.4" height="7" fill="#000"/>
<text x="736.5" y="944" text-anchor="middle" class="tk">1.0</text>
<rect x="842" y="918" width="1.4" height="7" fill="#000"/>
<text x="842.5" y="944" text-anchor="middle" class="tk">1.5</text>
<rect x="947" y="918" width="1.4" height="7" fill="#000"/>
<text x="947.5" y="944" text-anchor="middle" class="tk">2.0</text>
<rect x="1053" y="918" width="1.4" height="7" fill="#000"/>
<text x="1053.5" y="944" text-anchor="middle" class="tk">2.5</text>
<rect x="1159" y="918" width="1.4" height="7" fill="#000"/>
<text x="1159.5" y="944" text-anchor="middle" class="tk">3.0</text>
<line x1="512.5" y1="595" x2="512.5" y2="953" stroke="#ff0000" stroke-width="1.2" stroke-dasharray="1.2 1.8"/>
<line x1="1172.5" y1="595" x2="1172.5" y2="953" stroke="#ff0000" stroke-width="1.2" stroke-dasharray="1.2 1.8"/>
<line x1="421" y1="648.5" x2="1181" y2="648.5" stroke="#ff0000" stroke-width="1.2" stroke-dasharray="1.2 1.8"/>
<line x1="421" y1="918.5" x2="1181" y2="918.5" stroke="#ff0000" stroke-width="1.2" stroke-dasharray="1.2 1.8"/>
<circle cx="762" cy="625" r="6" fill="#0000ff"/>
<text x="774" y="631" class="lg">damper.a_rel [rad/s2]</text>
<text x="0" y="0" transform="translate(453 782) rotate(-90)" text-anchor="middle" class="yl">[rad/s2]</text>
<rect x="1186" y="595" width="734" height="361" fill="#fff"/>
<line x1="1282.5" y1="648" x2="1282.5" y2="917" stroke="#c4c4c4" stroke-width="1" stroke-dasharray="1 2"/>
<line x1="1385.5" y1="648" x2="1385.5" y2="917" stroke="#c4c4c4" stroke-width="1" stroke-dasharray="1 2"/>
<line x1="1487.5" y1="648" x2="1487.5" y2="917" stroke="#c4c4c4" stroke-width="1" stroke-dasharray="1 2"/>
<line x1="1590.5" y1="648" x2="1590.5" y2="917" stroke="#c4c4c4" stroke-width="1" stroke-dasharray="1 2"/>
<line x1="1692.5" y1="648" x2="1692.5" y2="917" stroke="#c4c4c4" stroke-width="1" stroke-dasharray="1 2"/>
<line x1="1795.5" y1="648" x2="1795.5" y2="917" stroke="#c4c4c4" stroke-width="1" stroke-dasharray="1 2"/>
<line x1="1898.5" y1="648" x2="1898.5" y2="917" stroke="#c4c4c4" stroke-width="1" stroke-dasharray="1 2"/>
<line x1="1271" y1="655.5" x2="1908" y2="655.5" stroke="#c4c4c4" stroke-width="1" stroke-dasharray="1 2"/>
<line x1="1271" y1="671.5" x2="1908" y2="671.5" stroke="#d0d0d0" stroke-width="1" stroke-dasharray="1 2"/>
<line x1="1271" y1="687.5" x2="1908" y2="687.5" stroke="#c4c4c4" stroke-width="1" stroke-dasharray="1 2"/>
<line x1="1271" y1="703.5" x2="1908" y2="703.5" stroke="#d0d0d0" stroke-width="1" stroke-dasharray="1 2"/>
<line x1="1271" y1="719.5" x2="1908" y2="719.5" stroke="#c4c4c4" stroke-width="1" stroke-dasharray="1 2"/>
<line x1="1271" y1="735.5" x2="1908" y2="735.5" stroke="#d0d0d0" stroke-width="1" stroke-dasharray="1 2"/>
<line x1="1271" y1="751.5" x2="1908" y2="751.5" stroke="#c4c4c4" stroke-width="1" stroke-dasharray="1 2"/>
<line x1="1271" y1="767.5" x2="1908" y2="767.5" stroke="#d0d0d0" stroke-width="1" stroke-dasharray="1 2"/>
<line x1="1271" y1="782.5" x2="1908" y2="782.5" stroke="#c4c4c4" stroke-width="1" stroke-dasharray="1 2"/>
<line x1="1271" y1="798.5" x2="1908" y2="798.5" stroke="#d0d0d0" stroke-width="1" stroke-dasharray="1 2"/>
<line x1="1271" y1="814.5" x2="1908" y2="814.5" stroke="#c4c4c4" stroke-width="1" stroke-dasharray="1 2"/>
<line x1="1271" y1="830.5" x2="1908" y2="830.5" stroke="#d0d0d0" stroke-width="1" stroke-dasharray="1 2"/>
<line x1="1271" y1="846.5" x2="1908" y2="846.5" stroke="#c4c4c4" stroke-width="1" stroke-dasharray="1 2"/>
<line x1="1271" y1="862.5" x2="1908" y2="862.5" stroke="#d0d0d0" stroke-width="1" stroke-dasharray="1 2"/>
<line x1="1271" y1="878.5" x2="1908" y2="878.5" stroke="#c4c4c4" stroke-width="1" stroke-dasharray="1 2"/>
<line x1="1271" y1="894.5" x2="1908" y2="894.5" stroke="#d0d0d0" stroke-width="1" stroke-dasharray="1 2"/>
<line x1="1271" y1="910.5" x2="1908" y2="910.5" stroke="#c4c4c4" stroke-width="1" stroke-dasharray="1 2"/>
<line x1="1908.5" y1="648" x2="1908.5" y2="917" stroke="#d8d8d8" stroke-width="1"/>
<path d="M1281.8 750.5 C1283.8 753.7 1289.2 761.8 1293.6 769.6 C1298.0 777.5 1303.4 790.0 1308.3 797.6 C1313.2 805.2 1318.3 811.2 1323.0 815.3 C1327.7 819.4 1332.1 822.1 1336.3 822.1 C1340.5 822.1 1344.4 819.6 1348.1 815.3 C1351.8 811.0 1355.0 802.3 1358.4 796.2 C1361.8 790.1 1365.8 779.0 1368.7 778.5 C1371.7 778.0 1373.1 784.9 1376.1 793.2 C1379.0 801.6 1383.0 819.3 1386.4 828.6 C1389.8 837.9 1392.9 843.9 1396.7 849.2 C1400.5 854.5 1405.2 860.6 1409.1 860.4 C1413.0 860.1 1416.0 856.0 1420.3 847.7 C1424.6 839.5 1430.1 822.9 1435.0 810.9 C1439.9 798.9 1444.8 786.8 1449.7 775.5 C1454.6 764.2 1459.6 753.9 1464.5 743.1 C1469.4 732.3 1474.3 718.6 1479.2 710.7 C1484.1 702.9 1488.5 700.7 1493.9 696.0 C1499.3 691.3 1505.4 687.1 1511.6 682.7 C1517.8 678.3 1525.9 670.7 1530.8 669.5 C1535.7 668.3 1537.9 670.5 1541.1 675.4 C1544.3 680.3 1547.2 687.6 1549.9 698.9 C1552.6 710.2 1554.6 727.3 1557.3 743.1 C1560.0 758.9 1563.4 791.3 1566.1 793.8 C1568.8 796.3 1571.0 771.8 1573.5 757.9 C1576.0 744.0 1577.8 724.5 1580.8 710.7 C1583.8 697.0 1588.0 682.8 1591.8 675.4 C1595.6 668.0 1600.2 667.5 1603.6 666.5 C1607.0 665.5 1608.5 667.3 1612.4 669.5 C1616.3 671.7 1621.7 676.6 1627.1 679.8 C1632.5 683.0 1639.9 683.9 1644.8 688.6 C1649.7 693.3 1651.7 697.2 1656.6 707.8 C1661.5 718.4 1668.4 738.8 1674.3 752.0 C1680.2 765.2 1686.6 775.5 1692.0 787.3 C1697.4 799.1 1702.3 810.9 1706.7 822.7 C1711.1 834.5 1714.8 847.8 1718.5 858.0 C1722.2 868.2 1725.4 883.0 1728.8 884.0 C1732.2 885.0 1735.4 871.2 1739.1 863.9 C1742.8 856.6 1746.5 853.2 1750.9 840.4 C1755.3 827.6 1761.4 803.1 1765.6 787.3 C1769.8 771.5 1772.5 748.5 1775.9 745.5 C1779.3 742.5 1783.0 762.1 1786.2 769.6 C1789.4 777.1 1791.6 785.4 1795.1 790.3 C1798.5 795.2 1802.5 798.6 1806.9 799.1 C1811.3 799.6 1815.2 799.1 1821.6 793.2 C1828.0 787.3 1837.3 774.5 1845.2 763.7 C1853.1 752.9 1861.8 739.2 1868.7 728.4 C1875.6 717.6 1881.6 706.1 1886.4 698.9 C1891.2 691.7 1895.7 687.4 1897.6 685.1" fill="none" stroke="#0000ff" stroke-width="1"/>
<rect x="1269" y="648" width="1.6" height="270" fill="#000"/>
<rect x="1269" y="917" width="640" height="1.6" fill="#000"/>
<rect x="1261" y="655" width="8" height="1.4" fill="#000"/>
<text x="1255" y="661.5" text-anchor="end" class="tk">0.6</text>
<rect x="1263" y="671" width="6" height="1.4" fill="#000"/>
<rect x="1261" y="687" width="8" height="1.4" fill="#000"/>
<text x="1255" y="693.5" text-anchor="end" class="tk">0.4</text>
<rect x="1263" y="703" width="6" height="1.4" fill="#000"/>
<rect x="1261" y="719" width="8" height="1.4" fill="#000"/>
<text x="1255" y="725.5" text-anchor="end" class="tk">0.2</text>
<rect x="1263" y="735" width="6" height="1.4" fill="#000"/>
<rect x="1261" y="751" width="8" height="1.4" fill="#000"/>
<text x="1255" y="757.5" text-anchor="end" class="tk">0.0</text>
<rect x="1263" y="767" width="6" height="1.4" fill="#000"/>
<rect x="1261" y="782" width="8" height="1.4" fill="#000"/>
<text x="1255" y="788.5" text-anchor="end" class="tk">-0.2</text>
<rect x="1263" y="798" width="6" height="1.4" fill="#000"/>
<rect x="1261" y="814" width="8" height="1.4" fill="#000"/>
<text x="1255" y="820.5" text-anchor="end" class="tk">-0.4</text>
<rect x="1263" y="830" width="6" height="1.4" fill="#000"/>
<rect x="1261" y="846" width="8" height="1.4" fill="#000"/>
<text x="1255" y="852.5" text-anchor="end" class="tk">-0.6</text>
<rect x="1263" y="862" width="6" height="1.4" fill="#000"/>
<rect x="1261" y="878" width="8" height="1.4" fill="#000"/>
<text x="1255" y="884.5" text-anchor="end" class="tk">-0.8</text>
<rect x="1263" y="894" width="6" height="1.4" fill="#000"/>
<rect x="1261" y="910" width="8" height="1.4" fill="#000"/>
<text x="1255" y="916.5" text-anchor="end" class="tk">-1.0</text>
<rect x="1282" y="918" width="1.4" height="7" fill="#000"/>
<text x="1282.5" y="944" text-anchor="middle" class="tk">0.0</text>
<rect x="1385" y="918" width="1.4" height="7" fill="#000"/>
<text x="1385.5" y="944" text-anchor="middle" class="tk">0.5</text>
<rect x="1487" y="918" width="1.4" height="7" fill="#000"/>
<text x="1487.5" y="944" text-anchor="middle" class="tk">1.0</text>
<rect x="1590" y="918" width="1.4" height="7" fill="#000"/>
<text x="1590.5" y="944" text-anchor="middle" class="tk">1.5</text>
<rect x="1692" y="918" width="1.4" height="7" fill="#000"/>
<text x="1692.5" y="944" text-anchor="middle" class="tk">2.0</text>
<rect x="1795" y="918" width="1.4" height="7" fill="#000"/>
<text x="1795.5" y="944" text-anchor="middle" class="tk">2.5</text>
<rect x="1898" y="918" width="1.4" height="7" fill="#000"/>
<text x="1898.5" y="944" text-anchor="middle" class="tk">3.0</text>
<line x1="1270.5" y1="595" x2="1270.5" y2="953" stroke="#ff0000" stroke-width="1.2" stroke-dasharray="1.2 1.8"/>
<line x1="1910.5" y1="595" x2="1910.5" y2="953" stroke="#ff0000" stroke-width="1.2" stroke-dasharray="1.2 1.8"/>
<line x1="1186" y1="648.5" x2="1920" y2="648.5" stroke="#ff0000" stroke-width="1.2" stroke-dasharray="1.2 1.8"/>
<line x1="1186" y1="918.5" x2="1920" y2="918.5" stroke="#ff0000" stroke-width="1.2" stroke-dasharray="1.2 1.8"/>
<circle cx="1523" cy="625" r="6" fill="#0000ff"/>
<text x="1535" y="631" class="lg">damper.tau [N.m]</text>
<text x="0" y="0" transform="translate(1217 782) rotate(-90)" text-anchor="middle" class="yl">[N.m]</text>
</svg>
<div class="a" style="left:1182px;top:155px;width:3px;height:801px;background:#f0f0f0"></div>
<div class="a" style="left:1185px;top:155px;width:1px;height:801px;background:#a0a0a0"></div>
<div class="a" style="left:421px;top:563px;width:1499px;height:3px;background:#f0f0f0"></div>
<div class="a" style="left:421px;top:566px;width:1499px;height:1px;background:#a0a0a0"></div>
<div class="a" style="left:800px;top:562px;width:5px;height:5px;background:#000"></div>
<div class="a" style="left:1549px;top:562px;width:5px;height:5px;background:#000"></div>
<div class="a" style="left:1181px;top:357px;width:5px;height:5px;background:#000"></div>
<div class="a" style="left:1181px;top:757px;width:5px;height:5px;background:#000"></div>
<div class="a" style="left:0;top:956px;width:1920px;height:28px;background:#3d80bd"></div>
</body></html>
